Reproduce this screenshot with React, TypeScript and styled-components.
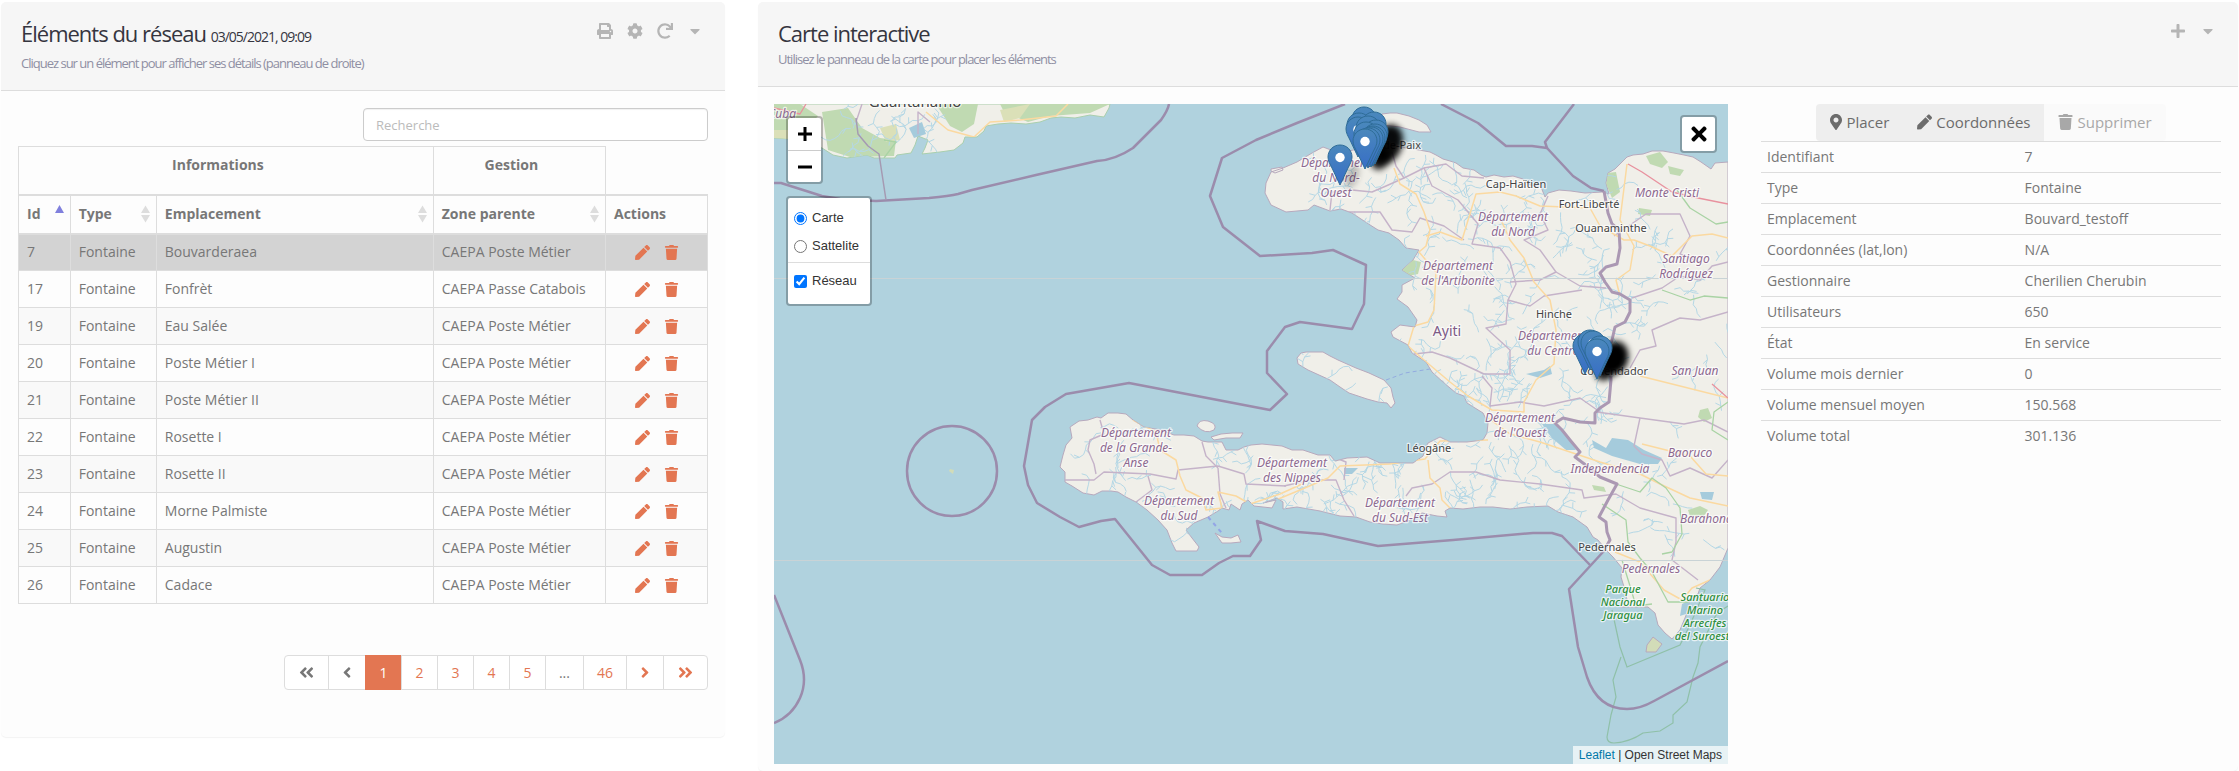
import React, { useState } from 'react';
import styled, { createGlobalStyle } from 'styled-components';
import {
  FaPrint, FaCog, FaRedo, FaCaretDown, FaPlus, FaPen, FaTrash, FaMapMarkerAlt, FaTimes,
  FaAngleLeft, FaAngleRight, FaAngleDoubleLeft, FaAngleDoubleRight,
} from 'react-icons/fa';

const ORANGE = '#e37652';
const LINE = '#dddddd';

const GlobalStyle = createGlobalStyle`
  *, *::before, *::after { box-sizing: border-box; }
  body {
    margin: 0;
    background: #ffffff;
    color: #777777;
    font: 14px/20px "Open Sans", sans-serif;
  }
  button, input { font: inherit; color: inherit; }
  button { cursor: pointer; }
`;

const Page = styled.main`
  display: grid;
  grid-template-columns: minmax(0, 724fr) minmax(0, 1480fr);
  gap: 33px;
  align-items: start;
  padding: 2px 1px 0;
`;

const Panel = styled.section`
  background: #fdfdfd;
  border-radius: 5px;
  box-shadow: 0 1px 1px rgba(0, 0, 0, 0.05);
`;

const PanelHeader = styled.header`
  display: flex;
  justify-content: space-between;
  align-items: flex-start;
  padding: 7px 22px 17px 20px;
  background: #f6f6f6;
  border-bottom: 1px solid ${LINE};
  border-radius: 5px 5px 0 0;
`;

const Title = styled.h1`
  margin: 0;
  color: #35353f;
  font-size: 22px;
  line-height: 48px;
  font-weight: 400;
  letter-spacing: -1px;
`;

const TitleDate = styled.small`
  font-size: 14px;
  line-height: 20px;
`;

const Subtitle = styled.p<{ $compact?: boolean }>`
  margin: ${(p) => (p.$compact ? '-8px 0 0' : '-4px 0 0')};
  color: #8f8fa3;
  font-size: 13px;
  line-height: 20px;
  font-weight: 400;
  letter-spacing: -1px;
`;

const HeaderTools = styled.div`
  display: flex;
  align-items: center;
  gap: 14px;
  padding-top: 14px;
`;

const ToolButton = styled.button`
  display: grid;
  place-items: center;
  width: 16px;
  height: 16px;
  padding: 0;
  border: 0;
  background: none;
  color: #b5b5b5;
  font-size: 16px;
`;

const ListBody = styled.div`
  padding: 17px 17px 47px;
`;

const SearchBox = styled.input`
  display: block;
  width: 50%;
  height: 33px;
  margin: 0 0 5px auto;
  padding: 0 12px;
  border: 1px solid #cccccc;
  border-radius: 4px;
  background: #ffffff;
  box-shadow: inset 0 1px 1px rgba(0, 0, 0, 0.06);
  font-size: 13px;
  &::placeholder { color: #bbbbbb; opacity: 1; }
`;

const Table = styled.table`
  width: 100%;
  border-collapse: collapse;
  table-layout: fixed;
`;

const GroupHead = styled.th`
  height: 48px;
  padding: 8px 24px 8px 8px;
  border: 1px solid ${LINE};
  border-bottom-width: 2px;
  vertical-align: top;
  font-weight: 700;
`;

const Head = styled.th`
  height: 39px;
  padding: 0 8px;
  border: 1px solid ${LINE};
  border-width: 2px 1px;
  text-align: left;
  font-weight: 700;
`;

const HeadContent = styled.span`
  display: flex;
  justify-content: space-between;
  align-items: center;
`;

const SortMark = styled.svg`
  width: 9px;
  height: 18px;
  margin-right: -2px;
  fill: ${LINE};
`;

const Row = styled.tr<{ $selected?: boolean }>`
  background: ${(p) => (p.$selected ? '#d3d3d3' : 'transparent')};
  &:nth-child(odd) { background: ${(p) => (p.$selected ? '#d3d3d3' : '#f9f9f9')}; }
`;

const Cell = styled.td`
  height: 37px;
  padding: 0 8px;
  border: 1px solid ${LINE};
`;

const RowActions = styled.div`
  display: flex;
  justify-content: center;
  gap: 14px;
`;

const RowButton = styled.button`
  display: grid;
  place-items: center;
  width: 15px;
  height: 16px;
  padding: 0;
  border: 0;
  background: none;
  color: ${ORANGE};
  font-size: 15px;
`;

const Pagination = styled.nav`
  display: flex;
  justify-content: flex-end;
  margin-top: 51px;
`;

const PageItem = styled.button<{ $active?: boolean; $muted?: boolean; $narrow?: boolean }>`
  display: flex;
  align-items: center;
  justify-content: center;
  min-width: 37px;
  height: 35px;
  padding: 0 13px;
  border: 1px solid ${(p) => (p.$active ? ORANGE : LINE)};
  margin-left: -1px;
  background: ${(p) => (p.$active ? ORANGE : '#ffffff')};
  color: ${(p) => (p.$active ? '#ffffff' : p.$muted ? '#777777' : ORANGE)};
  svg { width: ${(p) => (p.$narrow ? '10px' : '17px')}; height: 17px; }
  &:first-child { border-radius: 4px 0 0 4px; }
  &:last-child { border-radius: 0 4px 4px 0; }
`;

const MapBody = styled.div`
  display: grid;
  grid-template-columns: minmax(0, 954fr) minmax(0, 460fr);
  gap: 33px;
  align-items: start;
  padding: 17px 17px 7px 16px;
`;

const MapFrame = styled.div`
  position: relative;
  overflow: hidden;
  background: #b0d2de;
  font: 13px/20px "Liberation Sans", Arial, sans-serif;
  color: #333333;
`;

const MapDrawing = styled.svg`
  display: block;
  width: 100%;
  height: auto;
  font-family: "Noto Sans", sans-serif;
`;

const MapControls = styled.div`
  position: absolute;
  top: 12px;
  left: 12px;
  display: flex;
  flex-direction: column;
  align-items: flex-start;
  gap: 12px;
`;

const ControlBox = styled.div`
  border: 2px solid rgba(0, 0, 0, 0.25);
  border-radius: 4px;
  background: #ffffff;
  background-clip: padding-box;
`;

const ZoomButton = styled.button`
  display: grid;
  place-items: center;
  width: 33px;
  height: 32px;
  padding: 0;
  border: 0;
  background: none;
  & + & { border-top: 1px solid #cccccc; }
`;

const LayerForm = styled(ControlBox).attrs({ as: 'form' })`
  width: 86px;
  padding: 6px 0 9px;
`;

const LayerLabel = styled.label`
  display: flex;
  align-items: center;
  gap: 5px;
  height: 28px;
  padding: 0 6px;
  input { width: 13px; height: 13px; margin: 0; }
`;

const LayerRule = styled.hr`
  height: 1px;
  margin: 2px 0 4px;
  border: 0;
  background: ${LINE};
`;

const CloseMap = styled.button`
  position: absolute;
  top: 11px;
  right: 11px;
  display: grid;
  place-items: center;
  width: 37px;
  height: 38px;
  padding: 0;
  border: 2px solid rgba(0, 0, 0, 0.25);
  border-radius: 4px;
  background: #ffffff;
  background-clip: padding-box;
  color: #000000;
  font-size: 22px;
`;

const Attribution = styled.div`
  position: absolute;
  right: 0;
  bottom: 0;
  padding: 0 6px;
  background: rgba(255, 255, 255, 0.7);
  font-size: 12px;
  line-height: 18px;
  a { color: #0078a8; text-decoration: none; }
`;

const ButtonGroup = styled.div`
  display: flex;
  justify-content: center;
`;

const GroupButton = styled.button`
  display: flex;
  align-items: center;
  gap: 4px;
  height: 37px;
  padding: 0 14px 2px;
  border: 0;
  background: #eeeeee;
  color: #6c6c6c;
  font-size: 15px;
  svg { width: 15px; height: 16px; }
  &:first-child svg { width: 12px; }
  &:first-child { border-radius: 4px 0 0 4px; }
  &:last-child { border-radius: 0 4px 4px 0; }
  &:disabled { background: #fafafa; color: #a8a8a8; }
`;

const DetailTable = styled.table`
  width: 100%;
  border-collapse: collapse;
  table-layout: fixed;
`;

const DetailCell = styled.td`
  height: 31px;
  padding: 0 6px;
  border-top: 1px solid ${LINE};
`;

const DetailHead = styled(DetailCell).attrs({ as: 'th', scope: 'row' })`
  width: 56%;
  text-align: left;
  font-weight: 400;
`;

/* ---------- map data ---------- */

const HAITI =
  'M1266 183L1271 172L1283 168L1297 162L1312 153L1323 147L1331 150L1345 152L1382 143L1400 147L1419 150L1430 152L1436 155L1443 159L1450 161L1456 163L1463 168L1474 170L1481 175L1486 177L1494 175L1504 177L1513 176L1523 179L1530 185L1541 187L1545 197L1548 193L1559 190L1571 191L1585 193L1602 192L1609 194L1606 183L1608 173L1615 169L1622 162L1627 157L1633 155L1643 154L1652 151L1663 151L1674 153L1684 155L1693 157L1701 162L1711 169L1715 163L1728 162V548L1720 567L1710 580L1700 588L1698 594L1690 598L1687 613L1680 630L1672 639L1665 633L1658 625L1655 613L1648 607L1637 607L1620 607L1627 600L1625 590L1621 577L1622 568L1613 557L1608 552L1598 540L1593 537L1587 527L1573 517L1558 512L1548 506L1527 507L1510 509L1493 507L1480 507L1463 509L1450 508L1445 511L1447 517L1437 516L1422 513L1410 520L1397 525L1383 524L1370 522L1356 517L1340 516L1320 511L1297 507L1283 509L1283 502L1277 498L1263 503L1276 500L1272 508L1254 506L1248 500L1242 504L1240 510L1231 504L1229 510L1222 508L1218 511L1208 517L1194 523L1186 530L1192 538L1199 547L1197 551L1176 551L1172 543L1167 530L1158 520L1147 510L1136 502L1126 497L1118 492L1111 491L1102 491L1094 495L1083 493L1072 486L1065 482L1065 472L1060 467L1063 455L1066 445L1072 438L1070 427L1079 421L1088 420L1097 417L1101 418L1108 413L1118 413L1126 414L1133 420L1144 427L1161 430L1174 435L1184 435L1194 436L1202 441L1208 442L1222 442L1226 450L1238 450L1244 447L1251 445L1262 444L1272 445L1282 446L1292 450L1303 450L1318 455L1330 455L1335 461L1347 458L1367 457L1380 463L1397 463L1413 463L1423 456L1425 449L1428 443L1440 437L1450 442L1467 442L1483 440L1487 433L1488 423L1483 413L1467 403L1464 396L1456 393L1444 383L1432 372L1426 362L1412 353L1408 345L1393 337L1391 332L1400 325L1415 327L1417 320L1408 307L1397 299L1402 292L1402 285L1415 278L1402 270L1413 260L1419 250L1406 248L1399 240L1389 233L1378 230L1367 223L1352 213L1341 209L1330 211L1314 205L1308 210L1286 212L1271 205L1265 193ZM1271 169L1282 167L1283 170L1275 173L1271 171Z';

const ISLANDS = [
  'M1297 358L1301 353L1306 352L1323 352L1330 356L1338 360L1347 364L1356 368L1369 373L1384 380L1391 388L1393 397L1395 403L1391 408L1387 403L1378 402L1367 399L1349 393L1340 387L1330 380L1319 375L1308 370L1298 364Z',
  'M1382 114L1390 113L1397 113L1409 116L1419 120L1427 125L1431 132L1419 132L1400 127L1382 125Z',
  'M1197 426Q1199 419 1208 421Q1218 424 1214 430Q1205 435 1197 426Z',
  'M1211 437L1221 434L1232 433L1243 433L1240 438L1226 438L1214 440Z',
  'M1215 533L1222 537L1231 538L1238 535L1241 542L1231 543L1222 543Z',
];

const CUBA =
  'M774 104V138L790 139L822 148L833 155L847 158L867 155L874 158L895 158L897 155L911 153L915 145L918 136L928 140L925 148L922 154L940 152L954 150L963 143L965 137L977 137L984 131L986 126L998 124L1011 123L1026 124L1040 122L1051 118L1061 117L1075 118L1090 115L1104 117L1109 108L1110 104Z';

const FORESTS = [
  'M822 112L848 108L862 128L880 138L896 140L894 156L850 157L828 150Z',
  'M936 104H978L974 124L962 132L950 126Z',
  'M1000 104H1110L1090 113L1050 116L1028 122L1004 112Z',
  'M774 104H800L818 116L800 136L774 132Z',
  'M1402 270L1413 260L1421 262L1418 274L1408 276Z',
  'M1608 173L1616 172L1620 192L1612 198L1606 184Z',
  'M1646 156L1660 152L1668 162L1662 168L1650 164Z',
  'M1668 166L1684 170L1680 176L1670 174Z',
  'M1700 410L1708 408L1712 418L1704 422L1698 417Z',
  'M1688 510L1700 506L1708 510L1704 516L1690 516Z',
  'M1592 485L1604 487L1606 492L1594 490Z',
  'M1639 208L1652 210L1650 216L1638 214Z',
];

const LAKES = [
  'M1592 440L1606 448L1612 438L1628 440L1644 450L1662 458L1658 464L1640 464L1612 456L1594 448Z',
  'M1542 424L1556 424L1570 440L1576 450L1566 450L1552 438Z',
  'M1526 374L1544 370L1550 366L1552 374L1540 378Z',
  'M1344 468L1358 468L1352 474L1344 474Z',
  'M1700 492L1714 492L1712 500L1702 499Z',
  'M1682 604L1690 600L1686 614L1680 616Z',
  'M909 128L922 122L926 134L914 138Z',
];

const ROADS = [
  'M1394 168L1400 184L1416 194L1424 212L1430 230L1426 246L1419 252L1436 272L1434 310L1428 322L1414 326L1408 346L1424 360L1450 382L1468 396L1492 410L1524 412L1524 402L1536 380L1554 364L1556 330L1550 300L1534 282L1524 258L1510 240L1502 222',
  'M1426 236L1440 232L1462 240L1476 194L1500 192L1516 196L1540 206L1590 208L1600 226L1624 240L1634 240L1650 246L1672 256L1692 236L1712 234L1728 238',
  'M1627 164L1620 220L1634 246L1630 270L1616 280L1620 296',
  'M1640 376L1680 386L1728 398',
  'M1488 440L1440 441L1425 459L1390 464L1340 466L1328 478L1300 490L1276 500',
  'M1428 460L1430 478L1440 488L1442 500L1450 508',
  'M1133 420L1156 432L1160 450L1176 460L1180 476L1186 490L1202 498L1206 510L1222 508L1218 492L1236 496L1250 504L1280 494L1302 484',
  'M1488 418L1510 434L1540 442L1570 452L1600 462L1640 474L1660 484L1690 498L1728 506',
  'M1642 444L1690 456L1706 474L1728 476',
  'M1615 552L1640 562L1652 576L1664 590L1682 600L1692 588L1710 580',
  'M926 112L948 130L974 137L990 122L1020 120L1056 116L1068 104',
];

const GREEN_ROADS = [
  'M1677 190L1690 208L1716 224L1728 222',
  'M1728 440L1712 430L1714 412L1728 402',
  'M1616 484L1640 492L1652 478L1666 488L1680 508L1682 534L1672 552L1662 554',
  'M1602 504L1626 520L1628 542L1640 558L1652 572L1668 602L1700 602',
  'M1622 560L1630 586L1636 606L1652 604',
  'M1728 298L1704 296L1690 300L1662 290',
  'M884 140L896 142L884 158',
];

const RED_ROADS = ['M1628 164L1642 172L1672 192L1698 198L1728 204', 'M1712 384L1728 398', 'M774 108L800 114L806 104'];

const ADMIN = [
  'M1330 210L1332 192L1352 190L1372 192L1386 186L1404 178L1396 166L1392 152',
  'M1404 178L1424 168L1446 164L1462 176L1484 178',
  'M1424 168L1432 186L1458 200L1478 224L1472 244L1500 248L1510 262L1516 284L1508 300L1506 324L1486 328L1510 350L1510 374L1484 374L1450 358L1432 352L1414 354',
  'M1330 212L1380 212L1392 230L1412 232L1420 218L1444 226L1464 240',
  'M1510 282L1540 280L1556 272L1540 250L1524 240L1548 230L1540 214L1548 196',
  'M1556 272L1580 286L1606 288',
  'M1508 300L1530 306L1544 296L1582 290',
  'M1482 376L1492 388L1490 406L1520 402L1544 406L1580 398L1600 412',
  'M1597 412L1640 418L1684 424L1704 420L1728 432',
  'M1640 418L1634 446L1642 454L1662 460L1670 476L1690 468L1712 478L1728 460',
  'M1632 298L1662 288L1680 276L1700 280L1712 266L1728 262',
  'M1630 368L1640 350L1656 346L1652 330L1680 318L1700 320L1728 312',
  'M1614 236L1646 214L1680 214L1690 236L1680 254L1700 262',
  'M1284 486L1310 480L1336 480L1344 500L1354 516',
  'M1344 480L1346 462L1336 458',
  'M1406 496L1412 488L1432 484L1450 472L1476 472L1500 480L1540 484L1582 490L1584 498L1616 494L1640 508L1676 518L1676 542L1672 560L1698 580',
  'M1065 480L1094 480L1104 472L1150 474L1176 479L1178 470L1218 466L1244 474L1246 484L1286 486',
  'M1148 476L1152 490L1136 502M1202 442L1206 456L1218 468M1218 468L1220 494L1226 508',
  'M856 122L862 104M918 134L918 112L930 122',
  'M1100 420L1104 434L1090 440L1088 450L1094 464L1096 474',
];

const MARITIME = [
  'M774 183L781 183L822 196L840 199L876 201L929 198Q950 196 958 194L972 190L1036 175L1097 161Q1115 160 1133 148L1161 120Q1168 110 1169 104',
  'M1345 104L1297 123L1256 140L1222 158L1210 196L1223 227L1260 256L1312 253L1333 250L1366 265L1364 304L1352 329L1300 322L1285 327L1267 351V373L1287 394L1270 410L1129 383L1066 394L1045 407L1032 420L1024 466L1028 485L1037 503L1060 517L1079 527L1101 521L1115 519L1152 565L1170 575H1202L1219 563L1233 556L1250 556L1261 540L1257 521L1285 531L1323 534L1378 546L1453 540L1533 533L1552 533L1562 536L1590 565',
  'M1603 552L1569 589L1578 647L1587 677Q1598 709 1627 709Q1640 709 1654 701L1728 661',
  'M1441 104L1478 123L1506 146L1532 146L1547 148L1545 142L1574 104',
  'M1547 148L1573 176L1591 188L1604 191',
  'M774 595L800 660Q808 680 800 698Q792 716 774 723',
];

const BORDER =
  'M1604 191L1608 213L1612 224L1619 230L1620 248L1617 264L1606 267L1600 273L1605 282L1612 292L1620 294L1630 300L1630 312L1625 322L1615 327L1612 340L1607 350L1610 362L1611 380L1609 402L1600 408L1595 413L1595 423L1580 422L1563 418L1555 423L1562 430L1570 440L1580 452L1575 457L1587 466L1600 477L1617 484L1608 500L1599 517L1606 522L1607 532L1610 540L1603 552';

const RESERVE = [
  'M1612 610L1620 647L1627 667L1680 645L1690 625L1705 590L1696 588',
  'M1621 657L1613 680L1616 697L1611 715L1607 737Q1607 743 1614 743Q1630 742 1643 733L1660 731L1673 723V715L1687 702L1693 677L1698 663L1700 647L1717 613L1728 606',
];

const seeded = (seed: number) => () => {
  seed = (seed * 16807) % 2147483647;
  return seed / 2147483647;
};

const makeStreams = (count: number, x: number, y: number, w: number, h: number, seed: number) => {
  const next = seeded(seed);
  let d = '';
  for (let i = 0; i < count; i += 1) {
    let px = x + next() * w;
    let py = y + next() * h;
    let angle = next() * 6.28;
    d += `M${px.toFixed(1)} ${py.toFixed(1)}`;
    const steps = 4 + Math.floor(next() * 5);
    for (let s = 0; s < steps; s += 1) {
      angle += (next() - 0.5) * 1.7;
      px += Math.cos(angle) * 5;
      py += Math.sin(angle) * 5;
      d += `L${px.toFixed(1)} ${py.toFixed(1)}`;
      if (next() > 0.6) {
        const side = angle + (next() > 0.5 ? 1 : -1);
        d += `l${(Math.cos(side) * 6).toFixed(1)} ${(Math.sin(side) * 6).toFixed(1)}M${px.toFixed(1)} ${py.toFixed(1)}`;
      }
    }
  }
  return d;
};

const STREAMS =
  makeStreams(150, 1300, 155, 320, 250, 71) +
  makeStreams(65, 1060, 420, 270, 110, 913) +
  makeStreams(85, 1330, 400, 260, 120, 5521) +
  makeStreams(40, 1600, 160, 128, 440, 3317) +
  makeStreams(14, 840, 104, 90, 50, 404);

type LabelKind = 'region' | 'town' | 'country' | 'park' | 'city';
const LABEL_STYLE: Record<LabelKind, { size: number; fill: string; italic?: boolean; weight?: number }> = {
  region: { size: 12, fill: '#8d6990', italic: true },
  town: { size: 11, fill: '#444444' },
  country: { size: 14, fill: '#7d5a86' },
  park: { size: 11, fill: '#2f8f3f', italic: true, weight: 500 },
  city: { size: 15, fill: '#444444' },
};

const LABELS: { kind: LabelKind; x: number; y: number; lines: string[]; anchor?: 'start' | 'end' }[] = [
  { kind: 'city', x: 915, y: 107, lines: ['Guantánamo'] },
  { kind: 'region', x: 796, y: 118, lines: ['Santiago de Cuba'], anchor: 'end' },
  { kind: 'region', x: 1336, y: 167, lines: ['Département', 'du Nord-', 'Ouest'] },
  { kind: 'region', x: 1513, y: 221, lines: ['Département', 'du Nord'] },
  { kind: 'region', x: 1458, y: 270, lines: ['Département', "de l'Artibonite"] },
  { kind: 'region', x: 1553, y: 340, lines: ['Département', 'du Centre'] },
  { kind: 'region', x: 1520, y: 422, lines: ['Département', "de l'Ouest"] },
  { kind: 'region', x: 1136, y: 437, lines: ['Département', 'de la Grande-', 'Anse'] },
  { kind: 'region', x: 1179, y: 505, lines: ['Département', 'du Sud'] },
  { kind: 'region', x: 1292, y: 467, lines: ['Département', 'des Nippes'] },
  { kind: 'region', x: 1400, y: 507, lines: ['Département', 'du Sud-Est'] },
  { kind: 'region', x: 1667, y: 197, lines: ['Monte Cristi'] },
  { kind: 'region', x: 1686, y: 263, lines: ['Santiago', 'Rodríguez'] },
  { kind: 'region', x: 1695, y: 375, lines: ['San Juan'] },
  { kind: 'region', x: 1610, y: 473, lines: ['Independencia'] },
  { kind: 'region', x: 1690, y: 457, lines: ['Baoruco'] },
  { kind: 'region', x: 1680, y: 523, lines: ['Barahona'], anchor: 'start' },
  { kind: 'region', x: 1651, y: 573, lines: ['Pedernales'] },
  { kind: 'country', x: 1447, y: 336, lines: ['Ayiti'] },
  { kind: 'town', x: 1421, y: 149, lines: ['Port-de-Paix'], anchor: 'end' },
  { kind: 'town', x: 1516, y: 188, lines: ['Cap-Haïtien'] },
  { kind: 'town', x: 1589, y: 208, lines: ['Fort-Liberté'] },
  { kind: 'town', x: 1611, y: 232, lines: ['Ouanaminthe'] },
  { kind: 'town', x: 1554, y: 318, lines: ['Hinche'] },
  { kind: 'town', x: 1648, y: 375, lines: ['Comendador'], anchor: 'end' },
  { kind: 'town', x: 1429, y: 452, lines: ['Léogâne'] },
  { kind: 'town', x: 1607, y: 551, lines: ['Pedernales'] },
  { kind: 'park', x: 1623, y: 593, lines: ['Parque', 'Nacional', 'Jaragua'] },
  { kind: 'park', x: 1705, y: 601, lines: ['Santuario', 'Marino', 'Arrecifes', 'del Suroeste'] },
];

const PINS: [number, number][] = [
  [1364, 148], [1359, 154], [1374, 153], [1358, 158], [1368, 157], [1376, 161], [1366, 163],
  [1375, 165], [1373, 167], [1371, 168], [1368, 169], [1365, 170], [1340, 186],
  [1585, 375], [1590, 371], [1593, 372], [1600, 377], [1597, 380],
];

const SHADOWS: [number, number, number, number, number][] = [
  [1388, 144, 14, 20, 0.95], [1380, 158, 9, 12, 0.9], [1352, 176, 6, 12, 0.25],
  [1614, 358, 14, 17, 1], [1604, 371, 9, 10, 0.9],
];

function Pin({ x, y }: { x: number; y: number }) {
  return (
    <g transform={`translate(${x - 13} ${y - 42})`}>
      <path d="M13 1C6 1 1 6.500 1 13C1 17 3 20 5 24L13 41L21 24C23 20 25 17 25 13C25 6.500 20 1 13 1Z" fill="url(#pin)" stroke="#2e6c97" strokeWidth="1" />
      <circle cx="13" cy="13.500" r="4.700" fill="#ffffff" />
    </g>
  );
}

function HaitiMap() {
  return (
    <MapDrawing viewBox="774 104 954 660" role="img" aria-label="Carte d'Haïti">
      <defs>
        <clipPath id="land"><path d={HAITI} /><path d={CUBA} /><path d={ISLANDS[0]} /></clipPath>
        <linearGradient id="pin" x1="0" y1="0" x2="0" y2="1">
          <stop offset="0" stopColor="#4a88bc" />
          <stop offset="1" stopColor="#376dc6" />
        </linearGradient>
        <filter id="soft" x="-50%" y="-50%" width="200%" height="200%"><feGaussianBlur stdDeviation="3" /></filter>
      </defs>
      <rect x="774" y="104" width="954" height="660" fill="#b0d2de" />
      <g fill="#f0efe9" stroke="#b7a9bd" strokeWidth="1" strokeLinejoin="round">
        <path d={HAITI} />
        {ISLANDS.map((d) => <path key={d} d={d} />)}
        <path d={CUBA} stroke="#a9cfae" />
      </g>
      <path d="M1646 652L1647 645L1653 637L1662 644L1656 652Z" fill="#d2dcb8" stroke="#b7a9bd" />
      <path d="M950 469L954 470L953 474L949 471Z" fill="#d2dcb8" />
      <g clipPath="url(#land)" fill="none" strokeLinejoin="round">
        {FORESTS.map((d) => <path key={d} d={d} fill="#c0dab2" />)}
        <path d="M1000 110L1030 104L1020 118L1004 122ZM880 128L896 124L900 140L886 142ZM770 130L800 130L800 142L770 142Z" fill="#dbe0b8" />
        <path d={STREAMS} stroke="#b4d7e5" strokeWidth="1" />
        {LAKES.map((d) => <path key={d} d={d} fill="#a5cbdc" />)}
        <g stroke="#c5b3c9" strokeWidth="1.400">{ADMIN.map((d) => <path key={d} d={d} />)}</g>
        <g stroke="#fbd9a0" strokeWidth="1.500">{ROADS.map((d) => <path key={d} d={d} />)}</g>
        <g stroke="#a9d3a4" strokeWidth="1.300">{GREEN_ROADS.map((d) => <path key={d} d={d} />)}</g>
        <g stroke="#e8919e" strokeWidth="1.300">{RED_ROADS.map((d) => <path key={d} d={d} />)}</g>
      </g>
      <path d="M1386 380L1405 373L1430 369" fill="none" stroke="#93abe0" strokeDasharray="4 3" />
      <path d="M1208 517L1222 533" fill="none" stroke="#93a5e6" strokeWidth="2" strokeDasharray="4 4" />
      <g fill="none" stroke="#8fc0a8" strokeWidth="1.200">{RESERVE.map((d) => <path key={d} d={d} />)}</g>
      <path d="M774 278.500H1728M774 560.500H1728" stroke="#c9d3d6" strokeWidth="1" />
      <g fill="none" stroke="#9b8cac" strokeWidth="2.500" strokeLinejoin="round">
        {MARITIME.map((d) => <path key={d} d={d} />)}
        <circle cx="952" cy="471" r="45" />
        <path d={BORDER} stroke="#ab98b3" strokeWidth="3" />
        <path d="M856 118L858 134L868 146L879 154L886 200" stroke="#a59ab2" strokeWidth="1.500" />
      </g>
      <g stroke="#ffffff" strokeOpacity="0.7" strokeWidth="2.500" strokeLinejoin="round" paintOrder="stroke">
        {LABELS.map((label) => {
          const look = LABEL_STYLE[label.kind];
          return label.lines.map((line, i) => (
            <text
              key={`${label.x}-${line}`}
              x={label.x}
              y={label.y + i * (label.kind === 'park' ? 13 : 15)}
              textAnchor={label.anchor ?? 'middle'}
              fontSize={look.size}
              fontStyle={look.italic ? 'italic' : 'normal'}
              fontWeight={look.weight ?? 400}
              fill={look.fill}
            >
              {line}
            </text>
          ));
        })}
      </g>
      {SHADOWS.map(([x, y, rx, ry, o]) => (
        <ellipse key={`${x}-${y}`} cx={x} cy={y} rx={rx} ry={ry} fill="#000000" opacity={o} transform={`rotate(20 ${x} ${y})`} filter="url(#soft)" />
      ))}
      {PINS.map(([x, y]) => <Pin key={`${x}-${y}`} x={x} y={y} />)}
    </MapDrawing>
  );
}

/* ---------- page ---------- */

const ROWS: [number, string, string][] = [
  [7, 'Bouvarderaea', 'CAEPA Poste Métier'],
  [17, 'Fonfrèt', 'CAEPA Passe Catabois'],
  [19, 'Eau Salée', 'CAEPA Poste Métier'],
  [20, 'Poste Métier I', 'CAEPA Poste Métier'],
  [21, 'Poste Métier II', 'CAEPA Poste Métier'],
  [22, 'Rosette I', 'CAEPA Poste Métier'],
  [23, 'Rosette II', 'CAEPA Poste Métier'],
  [24, 'Morne Palmiste', 'CAEPA Poste Métier'],
  [25, 'Augustin', 'CAEPA Poste Métier'],
  [26, 'Cadace', 'CAEPA Poste Métier'],
];

const DETAILS: [string, string][] = [
  ['Identifiant', '7'],
  ['Type', 'Fontaine'],
  ['Emplacement', 'Bouvard_testoff'],
  ['Coordonnées (lat,lon)', 'N/A'],
  ['Gestionnaire', 'Cherilien Cherubin'],
  ['Utilisateurs', '650'],
  ['État', 'En service'],
  ['Volume mois dernier', '0'],
  ['Volume mensuel moyen', '150.568'],
  ['Volume total', '301.136'],
];

function SortIcon({ ascending }: { ascending?: boolean }) {
  return (
    <SortMark viewBox="0 0 9 18" aria-hidden="true">
      {ascending ? <path d="M4.500 0L9 8H0Z" fill="#8080dd" /> : <path d="M4.500 0.500L9 8H0ZM4.500 17.500L9 10H0Z" />}
    </SortMark>
  );
}

function NetworkTable() {
  const [selected, setSelected] = useState(7);
  return (
    <Table>
      <colgroup>
        <col style={{ width: '7.5%' }} />
        <col style={{ width: '12.5%' }} />
        <col style={{ width: '40.2%' }} />
        <col style={{ width: '25%' }} />
        <col />
      </colgroup>
      <thead>
        <tr>
          <GroupHead colSpan={3}>Informations</GroupHead>
          <GroupHead>Gestion</GroupHead>
        </tr>
        <tr>
          <Head><HeadContent>Id<SortIcon ascending /></HeadContent></Head>
          <Head><HeadContent>Type<SortIcon /></HeadContent></Head>
          <Head><HeadContent>Emplacement<SortIcon /></HeadContent></Head>
          <Head><HeadContent>Zone parente<SortIcon /></HeadContent></Head>
          <Head>Actions</Head>
        </tr>
      </thead>
      <tbody>
        {ROWS.map(([id, place, zone]) => (
          <Row key={id} $selected={id === selected} onClick={() => setSelected(id)}>
            <Cell>{id}</Cell>
            <Cell>Fontaine</Cell>
            <Cell>{place}</Cell>
            <Cell>{zone}</Cell>
            <Cell>
              <RowActions>
                <RowButton aria-label="Modifier"><FaPen /></RowButton>
                <RowButton aria-label="Supprimer"><FaTrash /></RowButton>
              </RowActions>
            </Cell>
          </Row>
        ))}
      </tbody>
    </Table>
  );
}

export default function App() {
  return (
    <>
      <GlobalStyle />
      <Page>
        <Panel>
          <PanelHeader>
            <div>
              <Title>Éléments du réseau <TitleDate>03/05/2021, 09:09</TitleDate></Title>
              <Subtitle>Cliquez sur un élément pour afficher ses détails (panneau de droite)</Subtitle>
            </div>
            <HeaderTools>
              <ToolButton aria-label="Imprimer"><FaPrint /></ToolButton>
              <ToolButton aria-label="Paramètres"><FaCog /></ToolButton>
              <ToolButton aria-label="Actualiser"><FaRedo /></ToolButton>
              <ToolButton aria-label="Plus d'options"><FaCaretDown /></ToolButton>
            </HeaderTools>
          </PanelHeader>
          <ListBody>
            <SearchBox type="text" placeholder="Recherche" aria-label="Recherche" />
            <NetworkTable />
            <Pagination aria-label="Pagination">
              <PageItem $muted aria-label="Première page"><FaAngleDoubleLeft /></PageItem>
              <PageItem $muted $narrow aria-label="Page précédente"><FaAngleLeft /></PageItem>
              <PageItem $active>1</PageItem>
              {['2', '3', '4', '5'].map((n) => <PageItem key={n}>{n}</PageItem>)}
              <PageItem $muted>...</PageItem>
              <PageItem>46</PageItem>
              <PageItem $narrow aria-label="Page suivante"><FaAngleRight /></PageItem>
              <PageItem aria-label="Dernière page"><FaAngleDoubleRight /></PageItem>
            </Pagination>
          </ListBody>
        </Panel>

        <Panel>
          <PanelHeader>
            <div>
              <Title>Carte interactive</Title>
              <Subtitle $compact>Utilisez le panneau de la carte pour placer les éléments</Subtitle>
            </div>
            <HeaderTools>
              <ToolButton aria-label="Ajouter"><FaPlus /></ToolButton>
              <ToolButton aria-label="Plus d'options"><FaCaretDown /></ToolButton>
            </HeaderTools>
          </PanelHeader>
          <MapBody>
            <MapFrame>
              <HaitiMap />
              <MapControls>
                <ControlBox>
                  <ZoomButton aria-label="Zoom avant">
                    <svg width="14" height="14" viewBox="0 0 14 14" aria-hidden="true"><path d="M7 0V14M0 7H14" stroke="#000" strokeWidth="3" /></svg>
                  </ZoomButton>
                  <ZoomButton aria-label="Zoom arrière">
                    <svg width="14" height="14" viewBox="0 0 14 14" aria-hidden="true"><path d="M0 7H14" stroke="#000" strokeWidth="3" /></svg>
                  </ZoomButton>
                </ControlBox>
                <LayerForm>
                  <LayerLabel><input type="radio" name="base" defaultChecked />Carte</LayerLabel>
                  <LayerLabel><input type="radio" name="base" />Sattelite</LayerLabel>
                  <LayerRule />
                  <LayerLabel><input type="checkbox" defaultChecked />Réseau</LayerLabel>
                </LayerForm>
              </MapControls>
              <CloseMap aria-label="Fermer"><FaTimes /></CloseMap>
              <Attribution><a href="https://leafletjs.com">Leaflet</a> | Open Street Maps</Attribution>
            </MapFrame>
            <div>
              <ButtonGroup>
                <GroupButton><FaMapMarkerAlt />Placer</GroupButton>
                <GroupButton><FaPen />Coordonnées</GroupButton>
                <GroupButton disabled><FaTrash />Supprimer</GroupButton>
              </ButtonGroup>
              <DetailTable>
                <tbody>
                  {DETAILS.map(([name, value]) => (
                    <tr key={name}>
                      <DetailHead>{name}</DetailHead>
                      <DetailCell>{value}</DetailCell>
                    </tr>
                  ))}
                </tbody>
              </DetailTable>
            </div>
          </MapBody>
        </Panel>
      </Page>
    </>
  );
}
